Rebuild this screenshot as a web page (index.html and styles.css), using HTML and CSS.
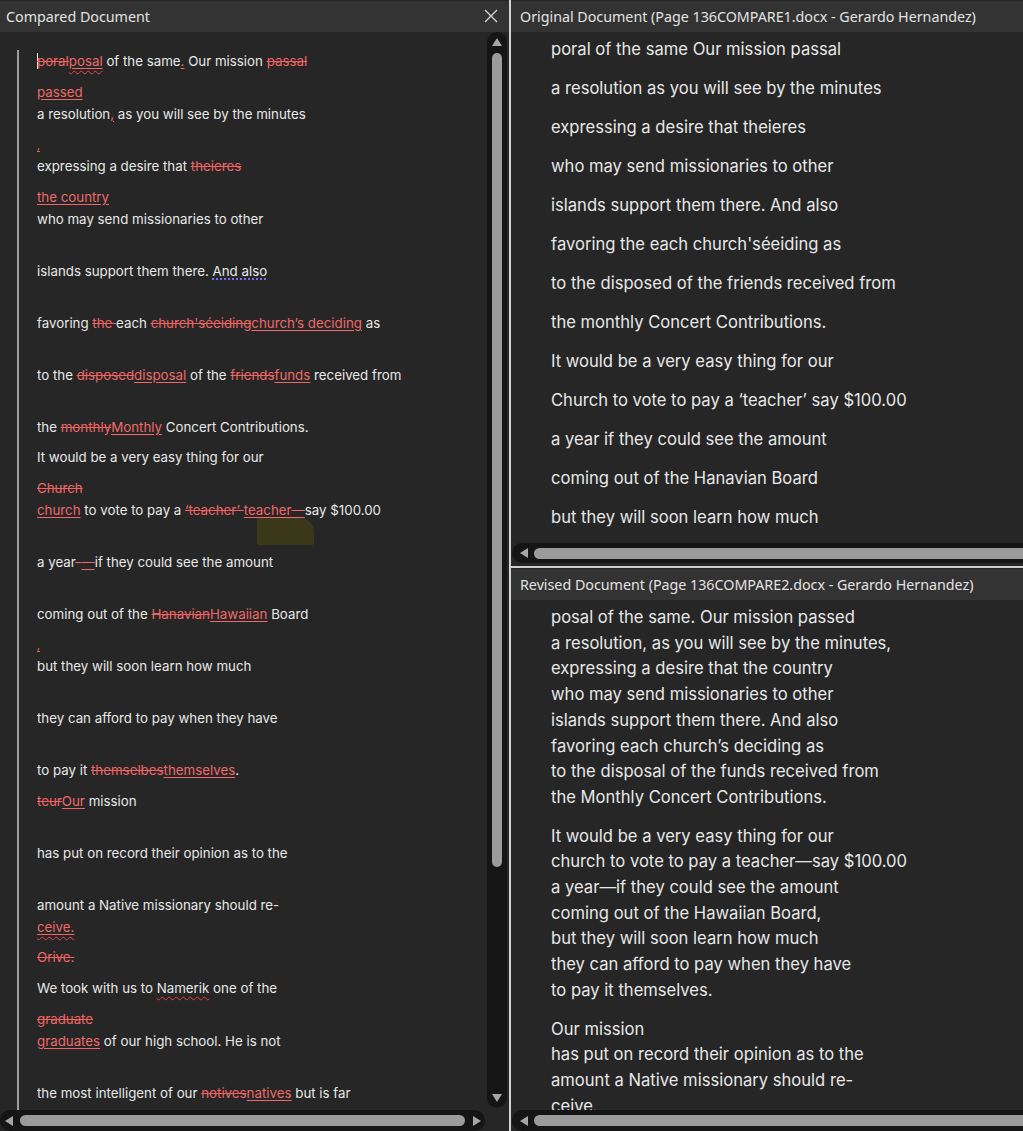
FILE: index.html
```html
<!DOCTYPE html>
<html>
<head>
<meta charset="utf-8">
<link rel="stylesheet" href="styles.css">
</head>
<body>
<div class="app">
  <section class="pane left">
    <header class="bar">
      <span class="title">Compared Document</span>
      <svg class="close" width="14" height="14" viewBox="0 0 14 14"><path d="M1 1 L13 13 M13 1 L1 13" stroke="#d8d8d8" stroke-width="1.3" fill="none"/></svg>
    </header>
    <div class="lbody">
      <div class="viewport">
        <div class="doc">
          <div class="ln first"><span class="caret"></span><del>poral</del><ins><span class="wavy">posal</span></ins> of the same<ins>.</ins> Our mission <del>passal</del></div>
          <div class="ln g1"><ins>passed</ins></div>
          <div class="ln">a resolution<ins>,</ins> as you will see by the minutes</div>
          <div class="ln g1"><ins class="tiny">,</ins></div>
          <div class="ln">expressing a desire that <del>theieres</del></div>
          <div class="ln g1"><ins>the country</ins></div>
          <div class="ln">who may send missionaries to other</div>
          <div class="ln g2">islands support them there. <span class="dotted">And also</span></div>
          <div class="ln g2">favoring <del>the </del>each <del>church'séeiding</del><ins>church’s deciding</ins> as</div>
          <div class="ln g2">to the <del>disposed</del><ins>disposal</ins> of the <del>friends</del><ins>funds</ins> received from</div>
          <div class="ln g2">the <del>monthly</del><ins>Monthly</ins> Concert Contributions.</div>
          <div class="ln g1">It would be a very easy thing for our</div>
          <div class="ln g1"><del>Church</del></div>
          <div class="ln"><ins>church</ins> to vote to pay a <del>‘teacher’ </del><ins>teacher—</ins>say $100.00</div>
          <div class="ln g2">a year<del>-</del><ins>—</ins>if they could see the amount</div>
          <div class="ln g2">coming out of the <del>Hanavian</del><ins>Hawaiian</ins> Board</div>
          <div class="ln g1"><ins class="tiny">,</ins></div>
          <div class="ln">but they will soon learn how much</div>
          <div class="ln g2">they can afford to pay when they have</div>
          <div class="ln g2">to pay it <del>themselbes</del><ins>themselves</ins>.</div>
          <div class="ln g1"><del>teur</del><ins>Our</ins> mission</div>
          <div class="ln g2">has put on record their opinion as to the</div>
          <div class="ln g2">amount a Native missionary should re-</div>
          <div class="ln"><ins><span class="wavy">ceive.</span></ins></div>
          <div class="ln g1"><del>Orive.</del></div>
          <div class="ln g1">We took with us to <span class="spell">Namerik</span> one of the</div>
          <div class="ln g1"><del>graduate</del></div>
          <div class="ln"><ins>graduates</ins> of our high school. He is not</div>
          <div class="ln g2">the most intelligent of our <del>notives</del><ins>natives</ins> but is far</div>
        </div>
        <div class="highlight"></div>
      </div>
      <div class="vscroll">
        <span class="arr up"></span>
        <div class="vtrack"><div class="vthumb"></div></div>
        <span class="arr down"></span>
      </div>
      <div class="hscroll">
        <span class="arr lt"></span>
        <div class="htrack"><div class="hthumb full"></div></div>
        <span class="arr rt"></span>
      </div>
      <div class="corner"></div>
    </div>
  </section>
  <div class="vdivider"></div>
  <section class="pane right">
    <div class="sub top">
      <header class="bar"><span class="title">Original Document (Page 136COMPARE1.docx - Gerardo Hernandez)</span></header>
      <div class="rview orig">
        <p>poral of the same Our mission passal</p>
        <p>a resolution as you will see by the minutes</p>
        <p>expressing a desire that theieres</p>
        <p>who may send missionaries to other</p>
        <p>islands support them there. And also</p>
        <p>favoring the each church'séeiding as</p>
        <p>to the disposed of the friends received from</p>
        <p>the monthly Concert Contributions.</p>
        <p>It would be a very easy thing for our</p>
        <p>Church to vote to pay a ‘teacher’ say $100.00</p>
        <p>a year if they could see the amount</p>
        <p>coming out of the Hanavian Board</p>
        <p>but they will soon learn how much</p>
      </div>
      <div class="hscroll r">
        <span class="arr lt"></span>
        <div class="htrack"><div class="hthumb open"></div></div>
      </div>
    </div>
    <div class="hdivider"></div>
    <div class="sub bottom">
      <header class="bar"><span class="title">Revised Document (Page 136COMPARE2.docx - Gerardo Hernandez)</span></header>
      <div class="rview rev">
        <div class="para">
          <p>posal of the same. Our mission passed</p>
          <p>a resolution, as you will see by the minutes,</p>
          <p>expressing a desire that the country</p>
          <p>who may send missionaries to other</p>
          <p>islands support them there. And also</p>
          <p>favoring each church’s deciding as</p>
          <p>to the disposal of the funds received from</p>
          <p>the Monthly Concert Contributions.</p>
        </div>
        <div class="para">
          <p>It would be a very easy thing for our</p>
          <p>church to vote to pay a teacher—say $100.00</p>
          <p>a year—if they could see the amount</p>
          <p>coming out of the Hawaiian Board,</p>
          <p>but they will soon learn how much</p>
          <p>they can afford to pay when they have</p>
          <p>to pay it themselves.</p>
        </div>
        <div class="para">
          <p>Our mission</p>
          <p>has put on record their opinion as to the</p>
          <p>amount a Native missionary should re-</p>
          <p>ceive.</p>
        </div>
      </div>
      <div class="hscroll r">
        <span class="arr lt"></span>
        <div class="htrack"><div class="hthumb open"></div></div>
      </div>
    </div>
  </section>
</div>
</body>
</html>
```

FILE: styles.css
```css
* { box-sizing: border-box; }
html, body { margin: 0; padding: 0; }
body {
  width: 1023px;
  height: 1131px;
  overflow: hidden;
  background: #262626;
  font-family: "Inter", "Noto Sans", sans-serif;
  color: #e6e6e6;
}
.app {
  display: flex;
  height: 1131px;
}
.pane {
  display: flex;
  flex-direction: column;
  height: 1131px;
  overflow: hidden;
}
.left { width: 509px; flex: none; }
.right { width: 512px; flex: none; }
.vdivider {
  width: 2px;
  flex: none;
  background: #d4d4d4;
}
.bar {
  height: 32px;
  flex: none;
  background: #333333;
  border-top: 1px solid #252525;
  display: flex;
  align-items: center;
  justify-content: space-between;
  padding: 0 11px 0 6px;
}
.right .bar { padding-left: 9px; }
.title {
  font-family: "Noto Sans", "Open Sans", sans-serif;
  font-size: 14.3px;
  color: #e2e2e2;
  white-space: nowrap;
  letter-spacing: -0.02px;
}
.close { margin-top: -2px; }

/* left body grid */
.lbody {
  flex: 1;
  display: grid;
  grid-template-columns: 485px 24px;
  grid-template-rows: 1fr 21px;
  min-height: 0;
}
.viewport {
  position: relative;
  overflow: hidden;
  background: #262626;
  padding: 18px 0 0 17px;
}
.doc {
  border-left: 2px solid #9d9d9d;
  padding-left: 18px;
  height: 2000px;
  font-size: 13.3px;
  color: #e8e8e8;
  white-space: nowrap;
}
.ln { height: 22px; line-height: 22px; position: relative; }
.ln.g1 { margin-top: 8.7px; }
.ln.g2 { margin-top: 29.9px; }
.ln.first { margin-top: 0; }
del {
  color: #ee6464;
  text-decoration: line-through;
  text-decoration-color: #ee6464;
}
ins {
  color: #ee6969;
  text-decoration: underline;
  text-decoration-color: #ee6969;
  text-underline-offset: 2px;
}
ins.tiny { font-size: 10px; }
.wavy {
  text-decoration: underline wavy #e24848;
  text-decoration-thickness: 1px;
  text-underline-offset: 4px;
}
.spell {
  text-decoration: underline wavy #e04444;
  text-decoration-thickness: 1px;
  text-underline-offset: 3px;
}
.dotted {
  text-decoration: underline dotted #7f6ff6;
  text-decoration-thickness: 2px;
  text-underline-offset: 3px;
}
.caret {
  display: inline-block;
  width: 1px;
  height: 16px;
  background: #f0f0f0;
  vertical-align: -3px;
  margin-right: -1px;
}
.highlight {
  position: absolute;
  left: 257px;
  top: 486px;
  width: 57px;
  height: 27px;
  background: #3a3818;
  border-radius: 2px 14px 2px 2px;
}

/* vertical scrollbar */
.vscroll {
  grid-column: 2;
  grid-row: 1;
  width: 20px;
  margin-left: 2px;
  margin-bottom: 2px;
  background: #151515;
  border-radius: 10px;
  display: flex;
  flex-direction: column;
  align-items: center;
  padding: 6px 0 6px;
}
.vtrack { flex: 1; width: 10px; padding: 7px 0 227px; }
.vthumb {
  height: 100%;
  background: #9b9b9b;
  border-radius: 5px;
}
.arr { width: 0; height: 0; display: block; flex: none; }
.arr.up { border-left: 5px solid transparent; border-right: 5px solid transparent; border-bottom: 8px solid #a6a6a6; }
.arr.down { border-left: 5px solid transparent; border-right: 5px solid transparent; border-top: 8px solid #a6a6a6; }
.arr.lt { border-top: 5px solid transparent; border-bottom: 5px solid transparent; border-right: 8px solid #a6a6a6; }
.arr.rt { border-top: 5px solid transparent; border-bottom: 5px solid transparent; border-left: 8px solid #a6a6a6; }

/* horizontal scrollbars */
.hscroll {
  grid-column: 1;
  grid-row: 2;
  height: 21px;
  background: #151515;
  border-radius: 10px;
  display: flex;
  align-items: center;
  padding: 0 4px 0 5px;
  gap: 7px;
}
.htrack { flex: 1; height: 11px; }
.hthumb { height: 100%; background: #9b9b9b; border-radius: 6px; }
.hthumb.full { margin-right: 1px; }
.hthumb.open { border-radius: 6px 0 0 6px; }
.corner { grid-column: 2; grid-row: 2; }

/* right panels */
.sub { display: flex; flex-direction: column; }
.sub.top { height: 563px; flex: none; }
.sub.bottom { flex: 1; min-height: 0; }
.hdivider {
  height: 5px;
  flex: none;
  border-top: 3px solid #262626;
  background: #cfcfcf;
}
.rview {
  flex: 1;
  min-height: 0;
  overflow: hidden;
  padding-left: 40px;
  font-size: 16.6px;
  color: #e8e8e8;
  white-space: nowrap;
}
.rview p { margin: 0; }
.orig { padding-top: 5px; }
.orig p { line-height: 24px; margin-bottom: 15px; }
.rev { padding-top: 5px; }
.rev p { line-height: 25.7px; }
.rev .para { margin-bottom: 13px; }
.hscroll.r {
  flex: none;
  height: 20px;
  border-radius: 10px 0 0 10px;
  padding: 0 0 0 8px;
  gap: 6px;
  margin-left: 1px;
}
.sub.bottom .hscroll.r { height: 21px; }
```
